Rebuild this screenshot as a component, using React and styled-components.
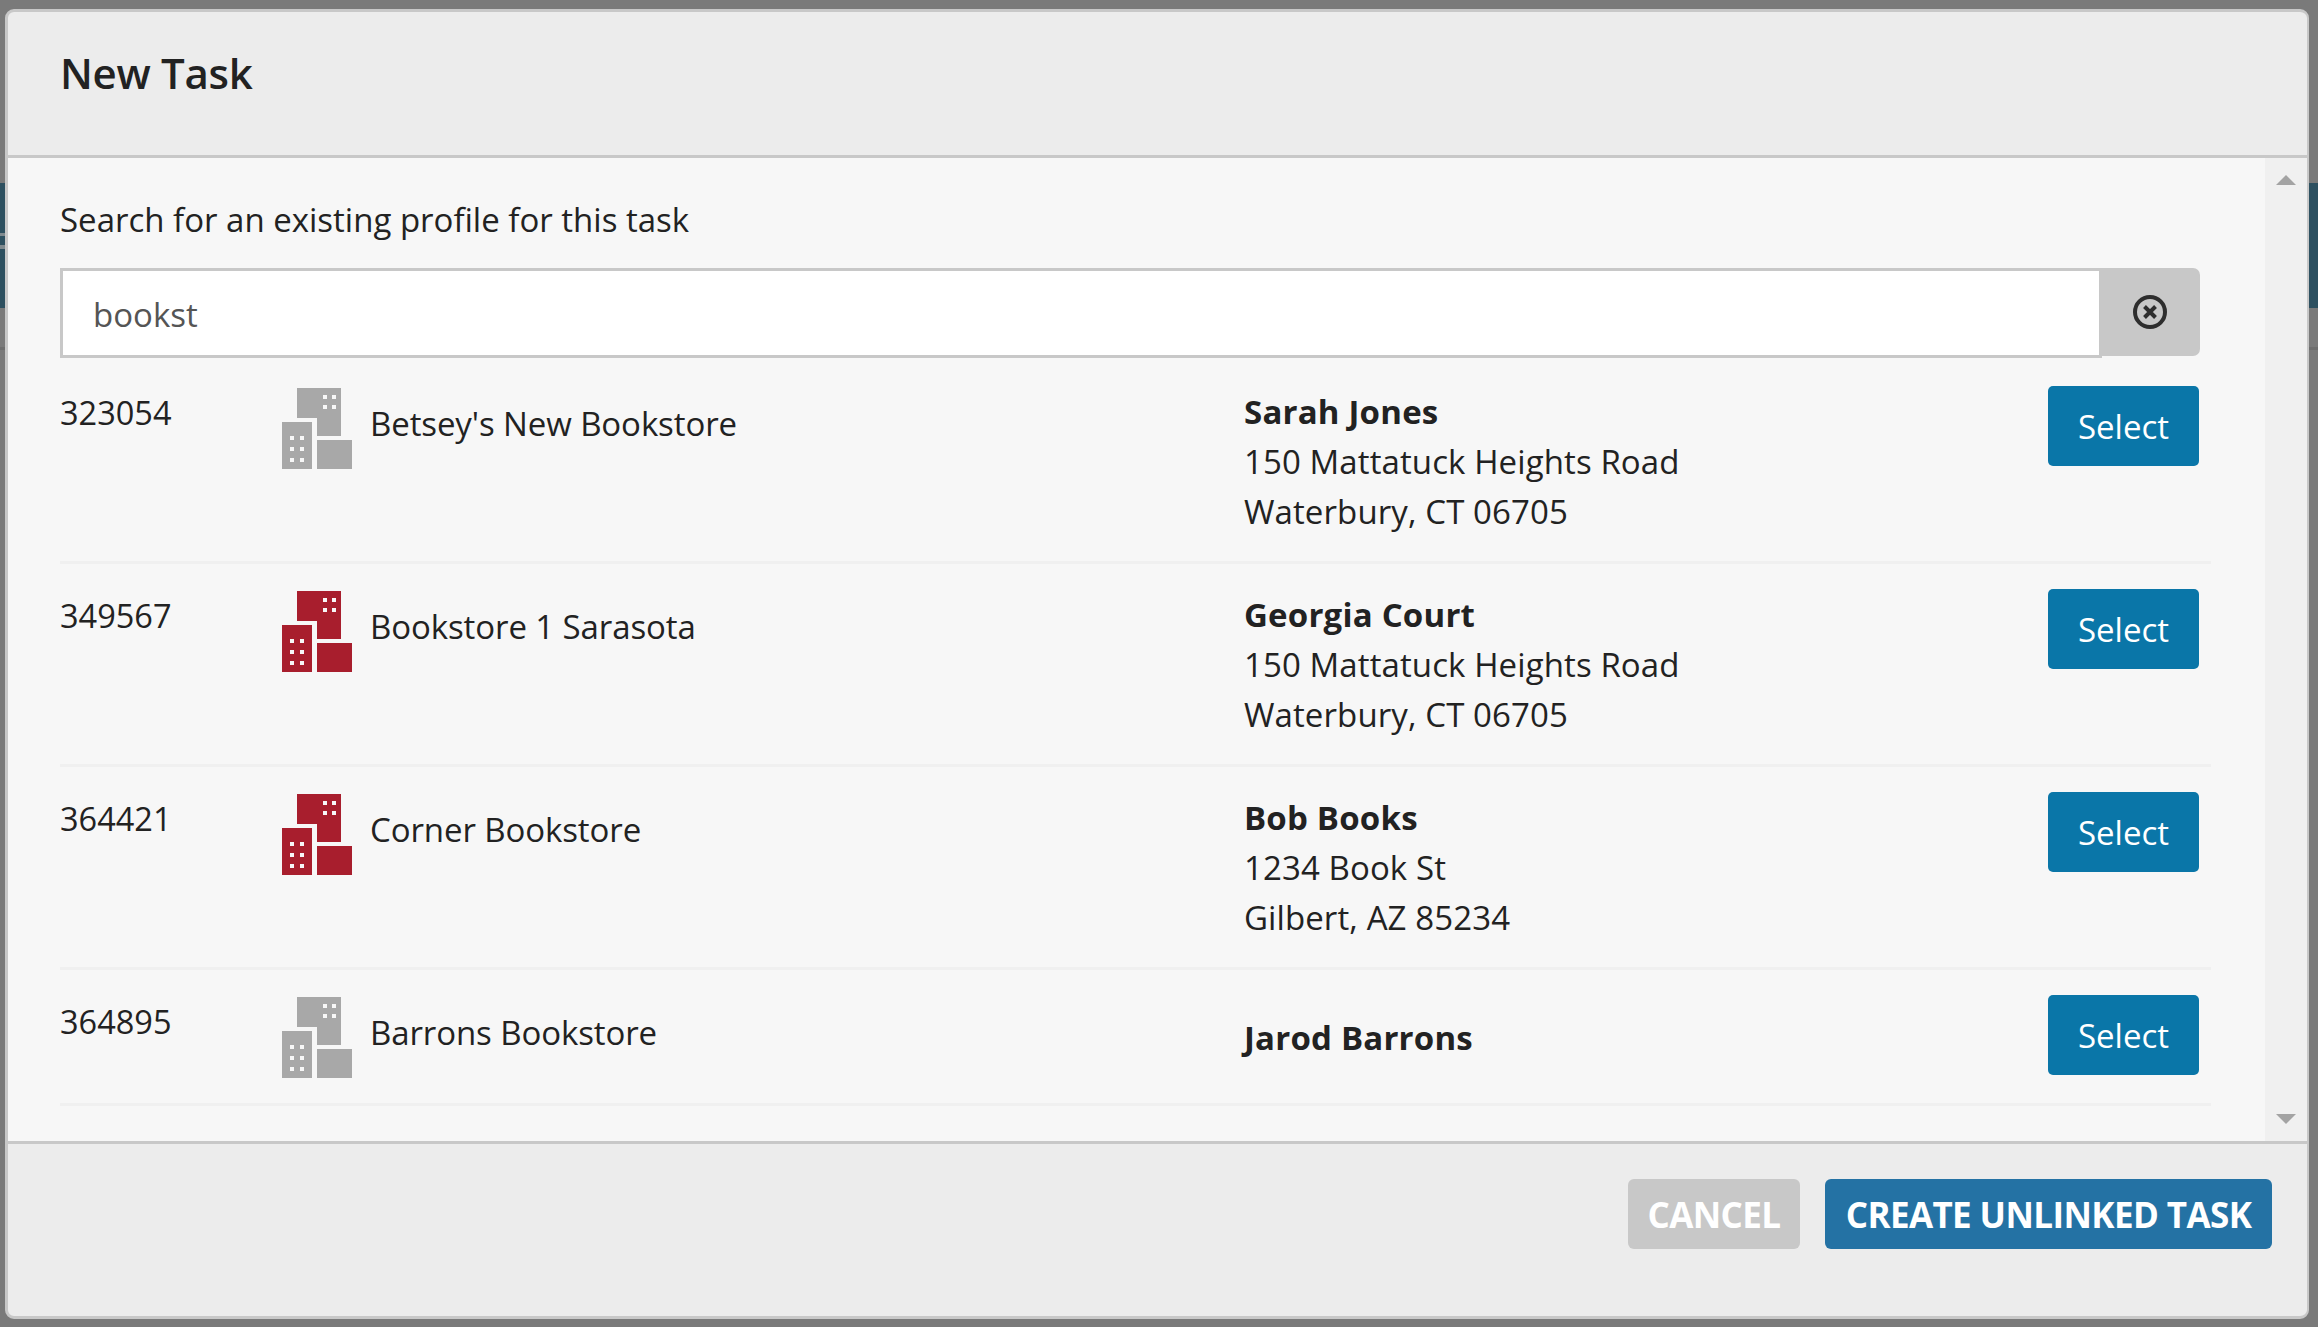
import React from "react"
import styled, { createGlobalStyle } from "styled-components"

const GlobalStyle = createGlobalStyle`
  html, body {
    margin: 0;
    padding: 0;
    height: 100%;
    overflow: hidden;
  }
  body {
    font-family: "Open Sans", "Noto Sans", sans-serif;
    color: #222;
  }
`

const Backdrop = styled.div`
  width: 2318px;
  height: 1327px;
  box-sizing: border-box;
  padding: 9px 9px 8px 5px;
  background:
    linear-gradient(#7f8a8f, #7f8a8f) 0 233px / 5px 3px no-repeat,
    linear-gradient(#7f8a8f, #7f8a8f) 0 245px / 5px 4px no-repeat,
    linear-gradient(#6e6e6e, #6e6e6e) 0 347px / 100% 3px no-repeat,
    linear-gradient(
      to bottom,
      #7a7a7a 0,
      #7a7a7a 183px,
      #2d5060 183px,
      #2d5060 308px,
      #7a7a7a 308px
    );
`

const Dialog = styled.div`
  height: 100%;
  box-sizing: border-box;
  display: flex;
  flex-direction: column;
  border-style: solid;
  border-color: #c8c8c8;
  border-width: 3px 2px 3px 3px;
  border-radius: 9px;
  overflow: hidden;
  background: #ececec;
`

const Header = styled.div`
  height: 146px;
  flex: none;
  box-sizing: border-box;
  padding: 33px 0 0 52px;
  border-bottom: 3px solid #c8c8c8;
  font-size: 42px;
  line-height: 56px;
  font-weight: 600;
  letter-spacing: -0.3px;
  color: #222;
`

const Middle = styled.div`
  flex: 1;
  min-height: 0;
  display: flex;
  background: #f7f7f7;
`

const Body = styled.div`
  flex: 1;
  min-width: 0;
  padding: 0 54px 0 52px;
`

const Prompt = styled.div`
  margin-top: 39px;
  font-size: 33px;
  line-height: 46px;
`

const SearchRow = styled.div`
  margin: 25px 0 3px;
  display: flex;
  height: 90px;
  padding-right: 11px;
`

const SearchInput = styled.div`
  flex: 1;
  box-sizing: border-box;
  display: flex;
  align-items: center;
  padding: 2px 0 0 30px;
  background: #fff;
  border: 3px solid #c8c8c8;
  font-size: 33px;
  color: #555;
`

const ClearAddon = styled.div`
  width: 98px;
  height: 88px;
  box-sizing: border-box;
  padding-right: 3px;
  display: flex;
  align-items: center;
  justify-content: center;
  background: #c8c8c8;
  border-radius: 0 7px 7px 0;
`

const Row = styled.div`
  display: flex;
  box-sizing: border-box;
  height: ${(p) => p.$height}px;
  padding-right: 12px;
  border-bottom: 3px solid #f0f0f0;
`

const Num = styled.div`
  width: 222px;
  flex: none;
  padding-top: 31px;
  font-size: 32.5px;
  line-height: 42px;
`

const NameCell = styled.div`
  width: 962px;
  flex: none;
  display: flex;
  gap: 18px;
  padding-top: 27px;
`

const Name = styled.div`
  padding-top: 15px;
  font-size: 33px;
  line-height: 42px;
  letter-spacing: -0.1px;
`

const Contact = styled.div`
  flex: 1;
  padding-top: ${(p) => p.$top}px;
  font-size: 33px;
  line-height: 50px;
  letter-spacing: 0.1px;
`

const ContactName = styled.div`
  font-weight: 700;
  letter-spacing: 0.2px;
`

const SelectButton = styled.button`
  width: 151px;
  height: 80px;
  margin-top: 25px;
  flex: none;
  border: 0;
  padding: 0;
  border-radius: 5px;
  background: #0a76a8;
  color: #fff;
  font-family: inherit;
  font-size: 33px;
`

const Scrollbar = styled.div`
  width: 42px;
  flex: none;
  display: flex;
  flex-direction: column;
  align-items: center;
  justify-content: space-between;
  padding: 17px 0 17px;
  box-sizing: border-box;
  background: #f0f0f0;
`

const Footer = styled.div`
  box-sizing: border-box;
  flex: 0 0 175px;
  display: flex;
  justify-content: flex-end;
  align-items: flex-start;
  gap: 25px;
  padding: 35px 35px 0 0;
  border-top: 3px solid #c8c8c8;
`

const FooterButton = styled.button`
  height: 70px;
  width: ${(p) => p.$width}px;
  border: 0;
  padding: 0;
  border-radius: 6px;
  background: ${(p) => p.$color};
  color: #fff;
  font-family: inherit;
  font-size: 35px;
  font-weight: 700;
  letter-spacing: -0.6px;
  white-space: nowrap;
`

function Buildings({ color }) {
  return (
    <svg width="70" height="81" viewBox="0 0 70 81">
      <path fill={color} d="M15 0H59V48H35V30H15Z" />
      <rect fill={color} x="0" y="34" width="30" height="47" />
      <rect fill={color} x="35" y="52" width="35" height="29" />
      <g fill="#f7f7f7">
        <rect x="41" y="7" width="4" height="4" />
        <rect x="50" y="7" width="4" height="4" />
        <rect x="41" y="17" width="4" height="4" />
        <rect x="50" y="17" width="4" height="4" />
        <rect x="8" y="48" width="4" height="4" />
        <rect x="18" y="48" width="4" height="4" />
        <rect x="8" y="59" width="4" height="4" />
        <rect x="18" y="59" width="4" height="4" />
        <rect x="8" y="70" width="4" height="4" />
        <rect x="18" y="70" width="4" height="4" />
      </g>
    </svg>
  )
}

function ClearIcon() {
  return (
    <svg width="34" height="34" viewBox="0 0 34 34">
      <circle cx="17" cy="17" r="15" fill="none" stroke="#2e2e2e" strokeWidth="4" />
      <path d="M11.5 11.5L22.5 22.5M22.5 11.5L11.5 22.5" stroke="#2e2e2e" strokeWidth="4" />
    </svg>
  )
}

function Arrow({ down }) {
  return (
    <svg width="20" height="10" viewBox="0 0 20 10">
      <path fill="#a3a3a3" d={down ? "M0 0H20L10 10Z" : "M10 0L20 10H0Z"} />
    </svg>
  )
}

const rows = [
  { id: "323054", name: "Betsey's New Bookstore", color: "#a8a8a8", contact: "Sarah Jones", lines: ["150 Mattatuck Heights Road", "Waterbury, CT 06705"], height: 203 },
  { id: "349567", name: "Bookstore 1 Sarasota", color: "#a81e2d", contact: "Georgia Court", lines: ["150 Mattatuck Heights Road", "Waterbury, CT 06705"], height: 203 },
  { id: "364421", name: "Corner Bookstore", color: "#a81e2d", contact: "Bob Books", lines: ["1234 Book St", "Gilbert, AZ 85234"], height: 203 },
  { id: "364895", name: "Barrons Bookstore", color: "#a8a8a8", contact: "Jarod Barrons", lines: [], height: 136 },
]

export default function App() {
  return (
    <>
      <GlobalStyle />
      <Backdrop>
        <Dialog>
          <Header>New Task</Header>
          <Middle>
            <Body>
              <Prompt>Search for an existing profile for this task</Prompt>
              <SearchRow>
                <SearchInput>bookst</SearchInput>
                <ClearAddon>
                  <ClearIcon />
                </ClearAddon>
              </SearchRow>
              {rows.map((r) => (
                <Row key={r.id} $height={r.height}>
                  <Num>{r.id}</Num>
                  <NameCell>
                    <Buildings color={r.color} />
                    <Name>{r.name}</Name>
                  </NameCell>
                  <Contact $top={r.lines.length ? 26 : 43}>
                    <ContactName>{r.contact}</ContactName>
                    {r.lines.map((l) => (
                      <div key={l}>{l}</div>
                    ))}
                  </Contact>
                  <SelectButton>Select</SelectButton>
                </Row>
              ))}
            </Body>
            <Scrollbar>
              <Arrow />
              <Arrow down />
            </Scrollbar>
          </Middle>
          <Footer>
            <FooterButton $width={172} $color="#c8c8c8">CANCEL</FooterButton>
            <FooterButton $width={447} $color="#2472a4">CREATE UNLINKED TASK</FooterButton>
          </Footer>
        </Dialog>
      </Backdrop>
    </>
  )
}
